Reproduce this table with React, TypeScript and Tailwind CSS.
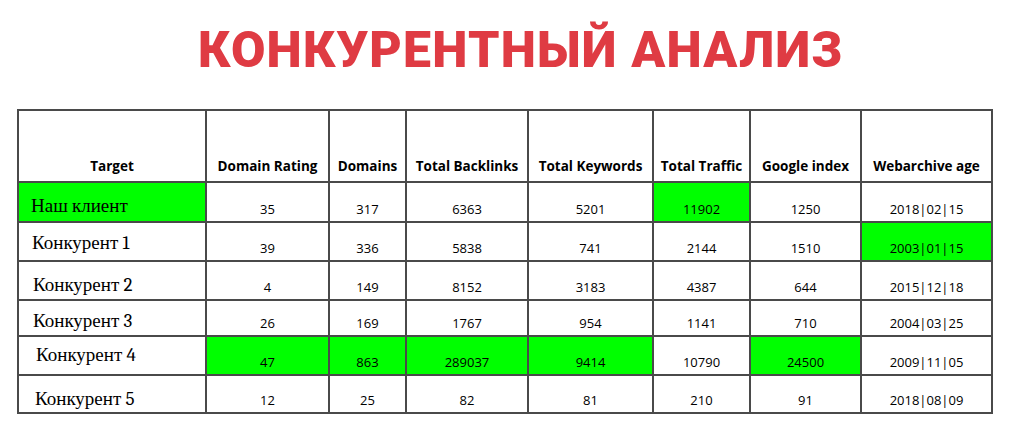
import React from "react";

const headers = ["Target", "Domain Rating", "Domains", "Total Backlinks", "Total Keywords", "Total Traffic", "Google index", "Webarchive age"];

type Row = { name: string; vals: string[]; green: number[]; h: number; pt: number; pl: number };

const rows: Row[] = [
  { name: "Наш клиент", vals: ["35", "317", "6363", "5201", "11902", "1250", "2018|02|15"], green: [0, 5], h: 40, pt: 12, pl: 12 },
  { name: "Конкурент 1", vals: ["39", "336", "5838", "741", "2144", "1510", "2003|01|15"], green: [7], h: 39, pt: 9, pl: 13 },
  { name: "Конкурент 2", vals: ["4", "149", "8152", "3183", "4387", "644", "2015|12|18"], green: [], h: 39, pt: 12, pl: 14 },
  { name: "Конкурент 3", vals: ["26", "169", "1767", "954", "1141", "710", "2004|03|25"], green: [], h: 36, pt: 9, pl: 14 },
  { name: "Конкурент 4", vals: ["47", "863", "289037", "9414", "10790", "24500", "2009|11|05"], green: [1, 2, 3, 4, 6], h: 39, pt: 7, pl: 17 },
  { name: "Конкурент 5", vals: ["12", "25", "82", "81", "210", "91", "2018|08|09"], green: [], h: 38, pt: 12, pl: 16 },
];

const gridCols = "grid grid-cols-[188px_123px_77px_122px_125px_97px_111px_131px]";

export default function App() {
  return (
    <div className="w-[1030px] h-[441px] bg-white overflow-hidden">
      <div className="pt-[22px] pl-[12px] h-[109px] flex justify-center">
        <h1
          className="text-[50px] leading-[56px] font-black text-[#df3b43] tracking-[1.2px]"
          style={{ fontFamily: "Roboto, 'Open Sans', sans-serif" }}
        >
          КОНКУРЕНТНЫЙ АНАЛИЗ
        </h1>
      </div>
      <div className="ml-[17px] w-fit border-l-2 border-t-2 border-[#4a4a4a]">
        <div className={gridCols}>
          {headers.map((h) => (
            <div
              key={h}
              className="h-[72px] border-r-2 border-b-2 border-[#4a4a4a] flex items-end justify-center pb-[5px] text-[13.5px] font-bold text-black"
              style={{ fontFamily: "'Open Sans', sans-serif" }}
            >
              {h}
            </div>
          ))}
        </div>
        {rows.map((r) => (
          <div key={r.name} className={gridCols}>
            <div
              className={`border-r-2 border-b-2 border-[#4a4a4a] text-[19px] leading-[22px] text-black ${r.green.includes(0) ? "bg-[#00ff00]" : "bg-white"}`}
              style={{ height: r.h, paddingTop: r.pt, paddingLeft: r.pl, fontFamily: "Cambria, 'Liberation Serif', serif" }}
            >
              {r.name}
            </div>
            {r.vals.map((v, i) => (
              <div
                key={i}
                className={`border-r-2 border-b-2 border-[#4a4a4a] flex items-end justify-center pb-[4px] text-[13px] leading-[16px] text-black ${r.green.includes(i + 1) ? "bg-[#00ff00]" : "bg-white"}`}
                style={{ height: r.h, fontFamily: "'Open Sans', sans-serif" }}
              >
                {v}
              </div>
            ))}
          </div>
        ))}
      </div>
    </div>
  );
}
